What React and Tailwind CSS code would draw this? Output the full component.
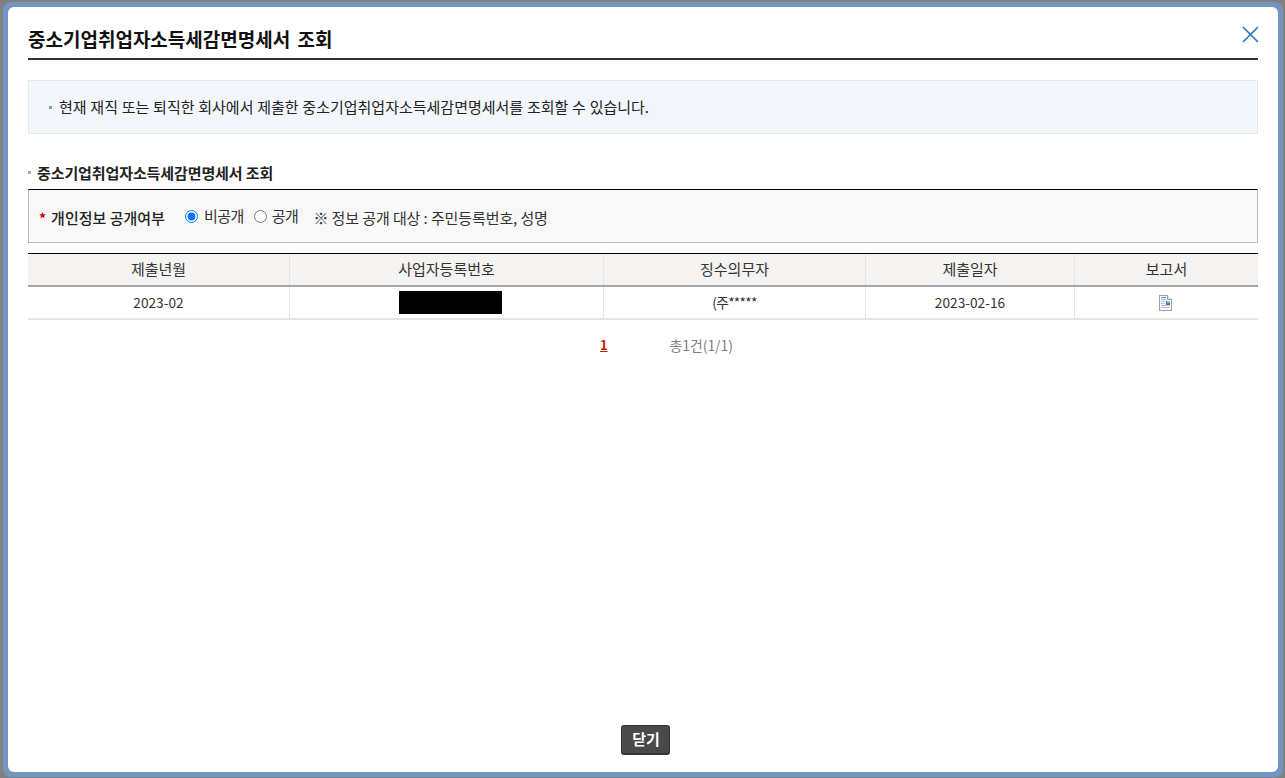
const FONT = "font-['Noto_Sans_CJK_KR','Liberation_Sans',sans-serif]";

function DocIcon() {
  return (
    <svg width="13" height="16" viewBox="0 0 13 16" shapeRendering="crispEdges">
      <path d="M0.5 0.5H8.5L12.5 4.5V15.5H0.5Z" fill="#fff" stroke="#a0a0a0" />
      <path d="M8.5 0.5V4.5H12.5" fill="#dfe6ee" stroke="#a0a0a0" />
      <rect x="2" y="2" width="5" height="1" fill="#4aa0b0" />
      <rect x="2" y="4" width="5" height="1" fill="#b9b9e6" />
      <rect x="2" y="6" width="4" height="1" fill="#b9b9e6" />
      <rect x="7" y="6" width="4" height="4" fill="#2f7fc8" />
      <rect x="8" y="6" width="3" height="2" fill="#8cc4ee" />
      <rect x="2" y="8" width="4" height="1" fill="#b9b9e6" />
      <rect x="2" y="10" width="9" height="1" fill="#b9b9e6" />
      <rect x="2" y="12" width="9" height="1" fill="#b9b9e6" />
    </svg>
  );
}

const cols = [
  { w: "w-[262px]", head: "제출년월", cell: "2023-02" },
  { w: "w-[314px]", head: "사업자등록번호", cell: <div className="ml-[109px] h-[23px] w-[103px] bg-black" /> },
  { w: "w-[262px]", head: "징수의무자", cell: <span className="tracking-[-0.7px]">(주*****</span> },
  { w: "w-[209px]", head: "제출일자", cell: "2023-02-16" },
  { w: "flex-1", head: "보고서", cell: <div className="flex justify-center pr-[2px]"><DocIcon /></div> },
];

export default function App() {
  return (
    <div className={`${FONT} h-[778px] w-[1285px] overflow-hidden bg-[#808080] pl-[3px] pr-[2px] pt-[2px] pb-px`}>
      <div className="h-full rounded-[8px] border-[5px] border-[#7396c1] bg-[#7396c1]">
        <div className="relative flex h-full flex-col rounded-[6px] bg-white px-[20px]">
          <button className="absolute right-[19px] top-[19px] text-[#1a72b4]" aria-label="닫기">
            <svg width="17" height="17" viewBox="0 0 17 17" className="block">
              <path d="M1 1L16 16M16 1L1 16" stroke="currentColor" strokeWidth="1.5" fill="none" />
            </svg>
          </button>

          <h1 className="mt-[18px] flex h-[35px] items-center border-b-2 border-[#333] pb-[6px] text-[19px] font-bold leading-none text-[#111] [word-spacing:3px]">
            중소기업취업자소득세감면명세서 조회
          </h1>

          <div className="mt-[20px] flex h-[54px] items-center border border-[#e0e8f3] bg-[#f3f6fb] pl-[20px] text-[15px] text-[#222] [word-spacing:0.4px]">
            <span className="mr-[7px] h-[3px] w-[3px] bg-[#999]" />
            현재 재직 또는 퇴직한 회사에서 제출한 중소기업취업자소득세감면명세서를 조회할 수 있습니다.
          </div>

          <h2 className="mt-[29px] flex h-[19px] items-center text-[15px] font-bold leading-none text-[#222]">
            <span className="mr-[6px] h-[3px] w-[3px] bg-[#aaa]" />
            <span className="tracking-[-0.1px]">중소기업취업자소득세감면명세서 조회</span>
          </h2>

          <div className="mt-[7px] flex h-[54px] items-center border border-t-black border-x-[#bbb] border-b-[#bbb] bg-[#f8f8f8] pl-[10px] text-[15px] text-[#333]">
            <span className="mr-[5px] pt-[3px] text-[14px] font-bold leading-none text-[#c00000]">*</span>
            <span className="translate-y-[2px] font-medium text-[#222]">개인정보 공개여부</span>
            <label className="ml-[20px] flex items-center">
              <input type="radio" name="open" defaultChecked className="m-0 h-[13px] w-[13px] accent-[#0075ff]" />
              <span className="ml-[6px] tracking-[-0.5px]">비공개</span>
            </label>
            <label className="ml-[10px] flex items-center">
              <input type="radio" name="open" className="m-0 h-[13px] w-[13px]" />
              <span className="ml-[5px] tracking-[-0.5px]">공개</span>
            </label>
            <span className="ml-[15px] translate-y-[2px] tracking-[-0.1px]">※ 정보 공개 대상 : 주민등록번호, 성명</span>
          </div>

          <div className="mt-[10px] border-t border-black text-[15px] text-[#333]">
            <div className="flex h-[33px] border-b-2 border-[#a5a5a5] bg-[#f4f3f1]">
              {cols.map((c, i) => (
                <div key={i} className={`${c.w} flex items-center justify-center ${i < 4 ? "border-r border-[#e6e6e6]" : ""}`}>
                  {c.head}
                </div>
              ))}
            </div>
            <div className="flex h-[33px] border-b-2 border-[#e4e4e4] text-[13.7px]">
              {cols.map((c, i) => (
                <div key={i} className={`${c.w} flex items-center justify-center ${i < 4 ? "border-r border-[#e6e6e6]" : ""}`}>
                  <div className="w-full text-center">{c.cell}</div>
                </div>
              ))}
            </div>
          </div>

          <div className="mt-[15px] flex h-[20px] items-center text-[14px] tracking-[-0.1px] text-[#808080]">
            <a className="ml-[572px] text-[13px] font-bold text-[#c02000] underline">1</a>
            <span className="ml-[62px]">총1건(1/1)</span>
          </div>

          <div className="mt-auto flex justify-center pb-[17px] pl-[4px]">
            <button className="h-[30px] w-[49px] rounded-[3px] border border-[#333] border-b-2 bg-[#4a4a4a] pl-[2px] text-[15px] font-bold text-white">
              닫기
            </button>
          </div>
        </div>
      </div>
    </div>
  );
}
